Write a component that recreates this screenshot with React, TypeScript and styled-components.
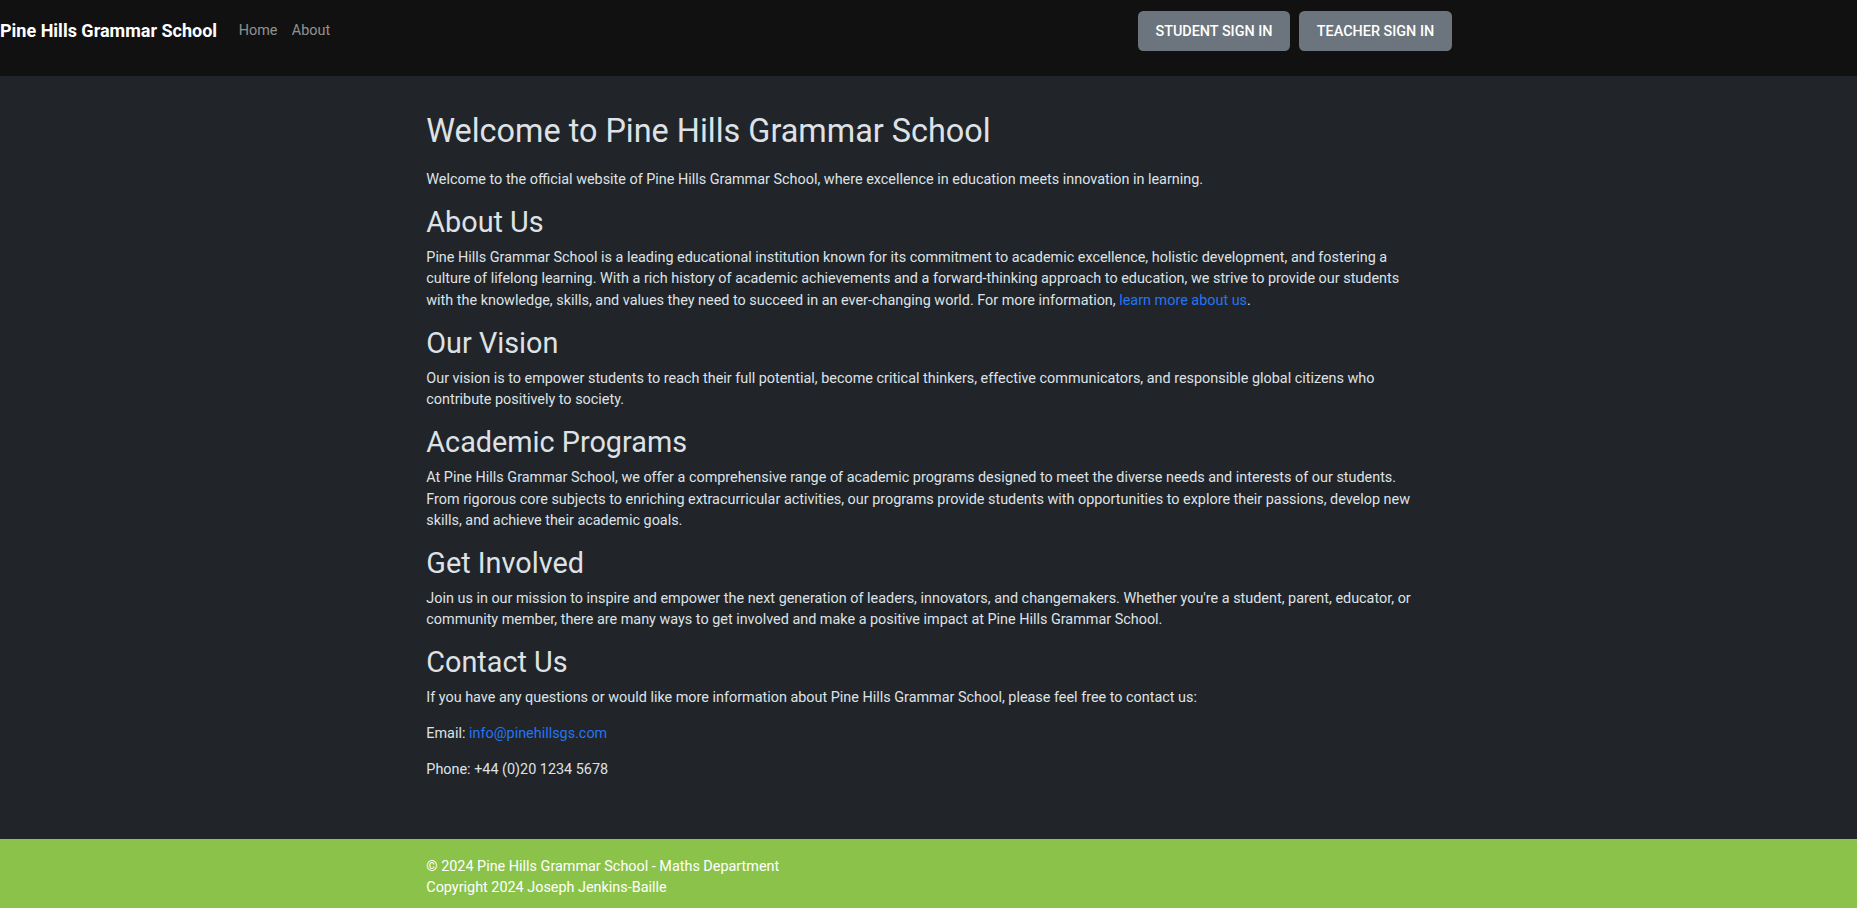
import React from "react";
import styled, { createGlobalStyle } from "styled-components";

const GlobalStyle = createGlobalStyle`
  *, *::before, *::after { box-sizing: border-box; }
  html, body { margin: 0; padding: 0; }
  body {
    background: #212529;
    color: #dee2e6;
    font-family: Roboto, "Noto Sans", "Liberation Sans", sans-serif;
    font-size: 14.4px;
    line-height: 1.5;
  }
`;

const Page = styled.div`
  display: flex;
  flex-direction: column;
  min-height: 100vh;
`;

const Header = styled.header`
  display: flex;
  align-items: flex-start;
  justify-content: space-between;
  height: 76px;
  padding: 11px 405px 0 0;
  background: #111111;
`;

const NavLeft = styled.nav`
  display: flex;
  align-items: center;
  height: 38px;
`;

const Brand = styled.a`
  font-size: 18px;
  font-weight: 700;
  line-height: 27px;
  color: #ffffff;
  text-decoration: none;
  margin-right: 14.4px;
`;

const NavLink = styled.a`
  font-size: 14.4px;
  line-height: 21.6px;
  padding: 2px 7.2px 0;
  color: rgba(255, 255, 255, 0.55);
  text-decoration: none;
`;

const ButtonGroup = styled.div`
  display: flex;
  gap: 9px;
`;

const SignInButton = styled.button<{ $width: number }>`
  width: ${(p) => p.$width}px;
  height: 40px;
  border: none;
  border-radius: 5.4px;
  background: #6c757d;
  color: #ffffff;
  font-family: Roboto, "Liberation Sans", sans-serif;
  font-size: 14.4px;
  font-weight: 500;
  text-transform: uppercase;
  cursor: pointer;
  padding: 0;
`;

const Main = styled.main`
  flex: 1;
  width: 100%;
  max-width: 1026px;
  margin: 0 auto;
  padding: 36px 14.8px 30px 10.8px;
`;

const Title = styled.h1`
  font-size: 32.4px;
  font-weight: 400;
  line-height: 1.2;
  margin: 0 0 18px;
  color: #dee2e6;
`;

const SectionTitle = styled.h2`
  font-size: 28.8px;
  font-weight: 400;
  line-height: 1.2;
  margin: 0 0 7.2px;
  color: #dee2e6;
`;

const Paragraph = styled.p`
  margin: 0 0 14.4px;
`;

const Link = styled.a`
  color: #2474f5;
  text-decoration: none;
`;

const Footer = styled.footer`
  background: #8bc34a;
  color: #ffffff;
  padding: 17px 0 9px;
`;

const FooterInner = styled.div`
  max-width: 1026px;
  margin: 0 auto;
  padding: 0 10.8px;
`;

const FooterLine = styled.div`
  line-height: 21.6px;
`;

const sections: { title: string; body: React.ReactNode }[] = [
  {
    title: "About Us",
    body: (
      <>
        Pine Hills Grammar School is a leading educational institution known for its commitment to academic
        excellence, holistic development, and fostering a culture of lifelong learning. With a rich history of
        academic achievements and a forward-thinking approach to education, we strive to provide our students
        with the knowledge, skills, and values they need to succeed in an ever-changing world. For more
        information, <Link href="#">learn more about us</Link>.
      </>
    ),
  },
  {
    title: "Our Vision",
    body: "Our vision is to empower students to reach their full potential, become critical thinkers, effective communicators, and responsible global citizens who contribute positively to society.",
  },
  {
    title: "Academic Programs",
    body: "At Pine Hills Grammar School, we offer a comprehensive range of academic programs designed to meet the diverse needs and interests of our students. From rigorous core subjects to enriching extracurricular activities, our programs provide students with opportunities to explore their passions, develop new skills, and achieve their academic goals.",
  },
  {
    title: "Get Involved",
    body: "Join us in our mission to inspire and empower the next generation of leaders, innovators, and changemakers. Whether you're a student, parent, educator, or community member, there are many ways to get involved and make a positive impact at Pine Hills Grammar School.",
  },
];

export default function App() {
  return (
    <Page>
      <GlobalStyle />
      <Header>
        <NavLeft>
          <Brand href="#">Pine Hills Grammar School</Brand>
          <NavLink href="#">Home</NavLink>
          <NavLink href="#">About</NavLink>
        </NavLeft>
        <ButtonGroup>
          <SignInButton $width={152}>Student Sign In</SignInButton>
          <SignInButton $width={153}>Teacher Sign In</SignInButton>
        </ButtonGroup>
      </Header>
      <Main>
        <Title>Welcome to Pine Hills Grammar School</Title>
        <Paragraph>
          Welcome to the official website of Pine Hills Grammar School, where excellence in education meets
          innovation in learning.
        </Paragraph>
        {sections.map((s) => (
          <section key={s.title}>
            <SectionTitle>{s.title}</SectionTitle>
            <Paragraph>{s.body}</Paragraph>
          </section>
        ))}
        <section>
          <SectionTitle>Contact Us</SectionTitle>
          <Paragraph>
            If you have any questions or would like more information about Pine Hills Grammar School, please feel
            free to contact us:
          </Paragraph>
          <Paragraph>
            Email: <Link href="#">info@pinehillsgs.com</Link>
          </Paragraph>
          <Paragraph>Phone: +44 (0)20 1234 5678</Paragraph>
        </section>
      </Main>
      <Footer>
        <FooterInner>
          <FooterLine>© 2024 Pine Hills Grammar School - Maths Department</FooterLine>
          <FooterLine>Copyright 2024 Joseph Jenkins-Baille</FooterLine>
        </FooterInner>
      </Footer>
    </Page>
  );
}
